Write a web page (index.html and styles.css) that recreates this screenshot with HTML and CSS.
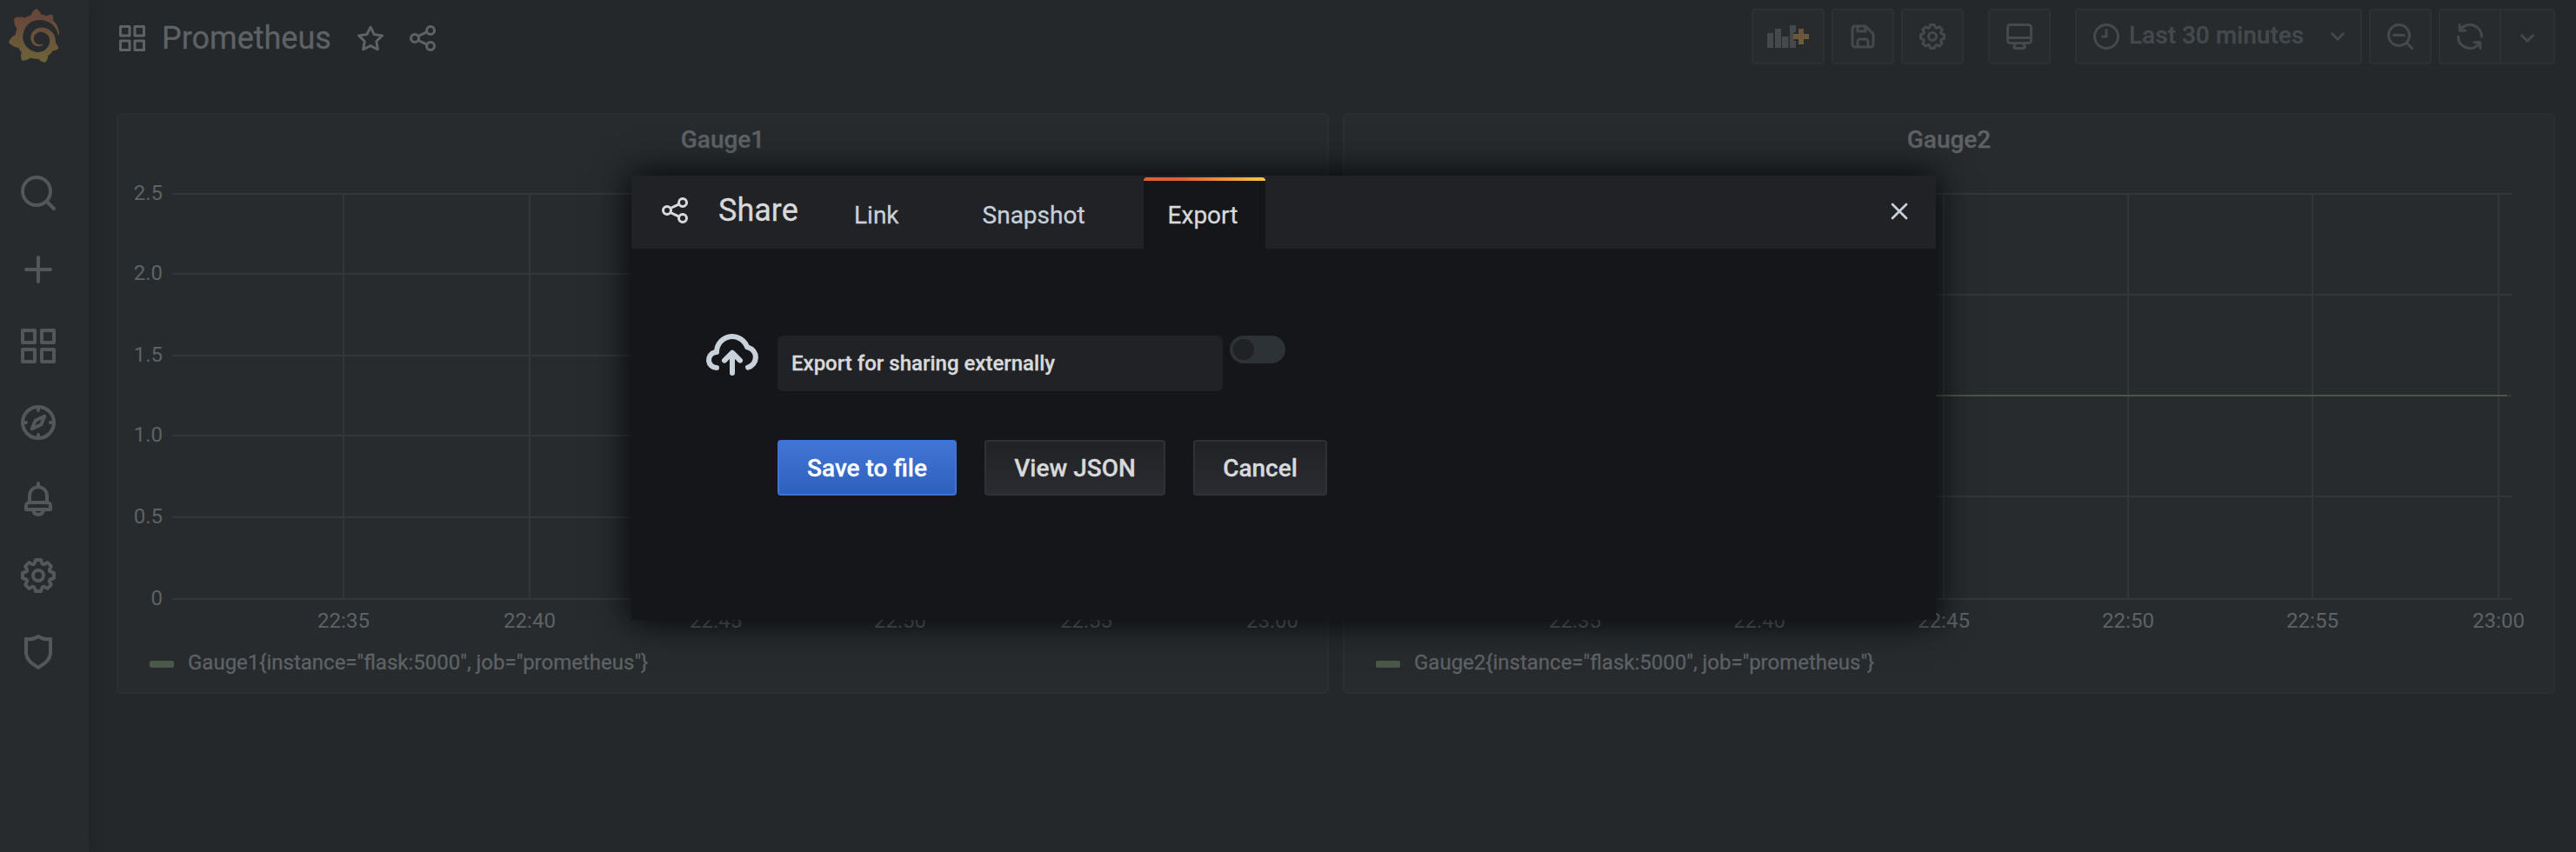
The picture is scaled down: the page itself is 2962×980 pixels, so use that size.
FILE: index.html
```
<!DOCTYPE html>
<html lang="en">
<head>
<meta charset="utf-8">
<title>Prometheus - Grafana</title>
<link rel="stylesheet" href="styles.css">
</head>
<body>
<svg class="sprite" width="0" height="0">
  <defs>
    <linearGradient id="logo-fill" x1="0" y1="0" x2="0" y2="1"><stop offset="0.15" stop-color="#67463b"/><stop offset="0.9" stop-color="#6c6039"/></linearGradient>
    <linearGradient id="plus-fill" x1="0" y1="0" x2="0" y2="1"><stop offset="0" stop-color="#6b4f3b"/><stop offset="1" stop-color="#6b613a"/></linearGradient>
    <symbol id="apps" viewBox="0 0 24 24"><path fill="none" stroke="currentColor" stroke-width="2" stroke-linejoin="round" d="M3 3h7v7H3zM14 3h7v7h-7zM3 14h7v7H3zM14 14h7v7h-7z"/></symbol>
    <symbol id="search" viewBox="0 0 24 24"><path fill="none" stroke="currentColor" stroke-width="2" stroke-linecap="round" d="M11 3a8 8 0 1 0 0 16a8 8 0 1 0 0-16M17 17l4 4"/></symbol>
    <symbol id="zoom-out" viewBox="0 0 24 24"><path fill="none" stroke="currentColor" stroke-width="2" stroke-linecap="round" d="M11 3a8 8 0 1 0 0 16a8 8 0 1 0 0-16M17 17l4 4M7 11h8"/></symbol>
    <symbol id="plus" viewBox="0 0 24 24"><path fill="none" stroke="currentColor" stroke-width="2" stroke-linecap="round" d="M12 5v14M5 12h14"/></symbol>
    <symbol id="compass" viewBox="0 0 24 24"><circle cx="12" cy="12" r="9" fill="none" stroke="currentColor" stroke-width="2"/><path fill="none" stroke="currentColor" stroke-width="2" stroke-linecap="round" stroke-linejoin="round" d="M12 3v2M12 19v2M3 12h2M19 12h2M15.6 8.4l-1.9 4.7-5.3 2.5 1.9-4.7z"/></symbol>
    <symbol id="bell" viewBox="0 0 24 24"><path d="M18,13.18V10a6,6,0,0,0-5-5.91V3a1,1,0,0,0-2,0V4.09A6,6,0,0,0,6,10v3.18A3,3,0,0,0,4,16v2a1,1,0,0,0,1,1H8.14a4,4,0,0,0,7.72,0H19a1,1,0,0,0,1-1V16A3,3,0,0,0,18,13.18ZM8,10a4,4,0,0,1,8,0v3H8Zm4,10a2,2,0,0,1-1.72-1h3.44A2,2,0,0,1,12,20Zm6-3H6V16a1,1,0,0,1,1-1H17a1,1,0,0,1,1,1Z"/></symbol>
    <symbol id="cog" viewBox="0 0 24 24"><path d="M21.32,9.55l-1.89-.63.89-1.78A1,1,0,0,0,20.13,6L18,3.87a1,1,0,0,0-1.15-.19l-1.78.89-.63-1.89A1,1,0,0,0,13.5,2h-3a1,1,0,0,0-.95.68L8.92,4.57,7.14,3.68A1,1,0,0,0,6,3.87L3.87,6a1,1,0,0,0-.19,1.15l.89,1.78-1.89.63A1,1,0,0,0,2,10.5v3a1,1,0,0,0,.68.95l1.89.63-.89,1.78A1,1,0,0,0,3.87,18L6,20.13a1,1,0,0,0,1.15.19l1.78-.89.63,1.89a1,1,0,0,0,.95.68h3a1,1,0,0,0,.95-.68l.63-1.89,1.78.89A1,1,0,0,0,18,20.13L20.13,18a1,1,0,0,0,.19-1.15l-.89-1.78,1.89-.63A1,1,0,0,0,22,13.5v-3A1,1,0,0,0,21.32,9.55ZM20,12.78l-1.2.4A2,2,0,0,0,17.64,16l.57,1.14-1.1,1.1L16,17.64a2,2,0,0,0-2.79,1.16l-.4,1.2H11.22l-.4-1.2A2,2,0,0,0,8,17.64l-1.14.57-1.1-1.1L6.36,16A2,2,0,0,0,5.2,13.18L4,12.78V11.22l1.2-.4A2,2,0,0,0,6.36,8L5.79,6.89l1.1-1.1L8,6.36A2,2,0,0,0,10.82,5.2l.4-1.2h1.56l.4,1.2A2,2,0,0,0,16,6.36l1.14-.57,1.1,1.1L17.64,8a2,2,0,0,0,1.16,2.79l1.2.4ZM12,8a4,4,0,1,0,4,4A4,4,0,0,0,12,8Zm0,6a2,2,0,1,1,2-2A2,2,0,0,1,12,14Z"/></symbol>
    <symbol id="shield" viewBox="0 0 24 24"><path d="M19.63,3.65a1,1,0,0,0-.84-.2,8,8,0,0,1-6.22-1.27,1,1,0,0,0-1.14,0A8,8,0,0,1,5.21,3.45a1,1,0,0,0-.84.2A1,1,0,0,0,4,4.43v7.45a9,9,0,0,0,3.77,7.33l3.65,2.6a1,1,0,0,0,1.16,0l3.65-2.6A9,9,0,0,0,20,11.88V4.43A1,1,0,0,0,19.63,3.65ZM18,11.88a7,7,0,0,1-2.93,5.7L12,19.77,8.93,17.58A7,7,0,0,1,6,11.88V5.58a10,10,0,0,0,6-1.39,10,10,0,0,0,6,1.39Z"/></symbol>
    <symbol id="star" viewBox="0 0 24 24"><path d="M22,9.67A1,1,0,0,0,21.14,9l-5.69-.83L12.9,3a1,1,0,0,0-1.8,0L8.55,8.16,2.86,9a1,1,0,0,0-.81.68,1,1,0,0,0,.25,1l4.13,4-1,5.68A1,1,0,0,0,6.9,21.44L12,18.77l5.1,2.67a.93.93,0,0,0,.46.12,1,1,0,0,0,.59-.19,1,1,0,0,0,.4-1l-1-5.68,4.13-4A1,1,0,0,0,22,9.67Zm-6.15,4a1,1,0,0,0-.29.88l.72,4.2-3.76-2a1.06,1.06,0,0,0-.94,0l-3.76,2,.72-4.2a1,1,0,0,0-.29-.88l-3-3,4.21-.61a1,1,0,0,0,.76-.55L12,5.7l1.88,3.82a1,1,0,0,0,.76.55l4.21.61Z"/></symbol>
    <symbol id="share" viewBox="0 0 24 24"><path d="M18,14a4,4,0,0,0-3.08,1.48l-5.1-2.35a3.64,3.64,0,0,0,0-2.26l5.1-2.35A4,4,0,1,0,14,6a4.17,4.17,0,0,0,.07.71L8.79,9.14a4,4,0,1,0,0,5.72l5.28,2.43A4.17,4.17,0,0,0,14,18a4,4,0,1,0,4-4ZM18,4a2,2,0,1,1-2,2A2,2,0,0,1,18,4ZM6,14a2,2,0,1,1,2-2A2,2,0,0,1,6,14Zm12,6a2,2,0,1,1,2-2A2,2,0,0,1,18,20Z"/></symbol>
    <symbol id="save" viewBox="0 0 24 24"><path d="M20.71,9.29l-6-6a1,1,0,0,0-.32-.21A1.09,1.09,0,0,0,14,3H6A3,3,0,0,0,3,6V18a3,3,0,0,0,3,3H18a3,3,0,0,0,3-3V10A1,1,0,0,0,20.71,9.29ZM9,5h4V7H9Zm6,14H9V16a1,1,0,0,1,1-1h4a1,1,0,0,1,1,1Zm4-1a1,1,0,0,1-1,1H17V16a3,3,0,0,0-3-3H10a3,3,0,0,0-3,3v3H6a1,1,0,0,1-1-1V6A1,1,0,0,1,6,5H7V8A1,1,0,0,0,8,9h6a1,1,0,0,0,1-1V6.41l4,4Z"/></symbol>
    <symbol id="monitor" viewBox="0 0 24 24"><path d="M19,2H5A3,3,0,0,0,2,5V15a3,3,0,0,0,3,3H7.64l-.58,1a2,2,0,0,0,0,2,2,2,0,0,0,1.75,1h6.46A2,2,0,0,0,17,21a2,2,0,0,0,0-2l-.59-1H19a3,3,0,0,0,3-3V5A3,3,0,0,0,19,2ZM8.77,20,10,18H14l1.2,2ZM20,15a1,1,0,0,1-1,1H5a1,1,0,0,1-1-1V14H20Zm0-3H4V5A1,1,0,0,1,5,4H19a1,1,0,0,1,1,1Z"/></symbol>
    <symbol id="clock" viewBox="0 0 24 24"><path fill="none" stroke="currentColor" stroke-width="2" stroke-linecap="round" stroke-linejoin="round" d="M12 3a9 9 0 1 0 0 18a9 9 0 1 0 0-18M12 7v5H9"/></symbol>
    <symbol id="sync" viewBox="0 0 24 24"><path d="M19.91,15.51H15.38a1,1,0,0,0,0,2h2.4A8,8,0,0,1,4,12a1,1,0,0,0-2,0,10,10,0,0,0,16.88,7.23V21a1,1,0,0,0,2,0V16.5A1,1,0,0,0,19.91,15.51ZM12,2A10,10,0,0,0,5.12,4.77V3a1,1,0,0,0-2,0V7.5a1,1,0,0,0,1,1h4.5a1,1,0,0,0,0-2H6.22A8,8,0,0,1,20,12a1,1,0,0,0,2,0A10,10,0,0,0,12,2Z"/></symbol>
    <symbol id="chevron" viewBox="0 0 16 10"><path fill="none" stroke="currentColor" stroke-width="2.8" stroke-linecap="round" stroke-linejoin="round" d="M1.6 1.7L8 8.2l6.4-6.5"/></symbol>
    <symbol id="close" viewBox="0 0 20 20"><path fill="none" stroke="currentColor" stroke-width="2.8" stroke-linecap="round" d="M2 2l16 16M18 2L2 18"/></symbol>
    <symbol id="cloud" viewBox="0 0 24 24"><path d="M18.42,9.21a7,7,0,0,0-13.36,1.9A4,4,0,0,0,6,19a1,1,0,0,0,0-2,2,2,0,0,1,0-4,1,1,0,0,0,1-1,5,5,0,0,1,9.73-1.61,1,1,0,0,0,.78.66,3,3,0,0,1,.24,5.84,1,1,0,1,0,.5,1.94,5,5,0,0,0,.17-9.62Z"/><path fill="none" stroke="currentColor" stroke-width="2" stroke-linecap="round" stroke-linejoin="round" d="M12 20v-7.6M9 15.2l3-3 3 3"/></symbol>
  </defs>
</svg>

<div class="app">
  <nav class="sidebar">
    <svg class="logo" viewBox="0.95 0 22.1 24" preserveAspectRatio="none"><path fill="url(#logo-fill)" d="M23.02 10.59a8.578 8.578 0 0 0-.862-3.034 8.911 8.911 0 0 0-1.789-2.445c.337-1.342-.413-2.505-.413-2.505-1.292-.08-2.113.4-2.416.62-.052-.02-.102-.044-.154-.064-.22-.089-.446-.172-.677-.247-.231-.073-.47-.14-.711-.197a9.867 9.867 0 0 0-.875-.161C14.557.753 12.94 0 12.94 0c-1.804 1.145-2.147 2.744-2.147 2.744l-.018.093c-.098.029-.2.057-.298.088-.138.042-.275.094-.413.143-.138.055-.275.107-.41.166a8.869 8.869 0 0 0-1.557.87l-.063-.029c-2.497-.955-4.716.195-4.716.195-.203 2.658.996 4.33 1.235 4.636a11.608 11.608 0 0 0-.607 2.635C1.636 12.677.953 15.014.953 15.014c1.926 2.214 4.171 2.351 4.171 2.351.003-.002.006-.002.006-.005.285.509.615.994.986 1.446.156.19.32.371.488.548-.704 2.009.099 3.68.099 3.68 2.144.08 3.553-.937 3.849-1.173a9.784 9.784 0 0 0 3.164.501h.08l.055-.003.107-.002.103-.005.003.002c1.01 1.44 2.788 1.646 2.788 1.646 1.264-1.332 1.337-2.653 1.337-2.94v-.058c0-.02-.003-.039-.003-.06.265-.187.52-.387.758-.6a7.875 7.875 0 0 0 1.415-1.7c1.43.083 2.437-.885 2.437-.885-.236-1.49-1.085-2.216-1.264-2.354l-.018-.013-.016-.013a.217.217 0 0 1-.031-.02c.008-.092.016-.18.02-.27.011-.162.016-.323.016-.48v-.253l-.005-.098-.008-.135a1.891 1.891 0 0 0-.01-.13c-.003-.042-.008-.083-.013-.125l-.016-.124-.018-.122a6.215 6.215 0 0 0-2.032-3.73 6.015 6.015 0 0 0-3.222-1.46 6.292 6.292 0 0 0-.85-.048l-.107.002h-.063l-.044.003-.104.008a4.777 4.777 0 0 0-3.335 1.695c-.332.4-.592.84-.768 1.297a4.594 4.594 0 0 0-.312 1.817l.003.091c.005.055.007.11.013.164a3.615 3.615 0 0 0 .698 1.82 3.53 3.53 0 0 0 1.827 1.282c.33.098.66.14.971.137.039 0 .078 0 .114-.002l.063-.003c.02 0 .041-.003.062-.003.034-.002.065-.007.099-.01.007 0 .018-.003.028-.003l.031-.005.06-.008a1.18 1.18 0 0 0 .112-.02c.036-.008.072-.013.109-.024a2.634 2.634 0 0 0 .914-.415c.028-.02.056-.041.085-.065a.248.248 0 0 0 .039-.35.244.244 0 0 0-.309-.06l-.078.042c-.09.044-.184.083-.283.116a2.476 2.476 0 0 1-.475.096c-.028.003-.054.006-.083.006l-.083.002c-.026 0-.054 0-.08-.002l-.102-.006h-.012l-.024.006c-.016-.003-.031-.003-.044-.006-.031-.002-.06-.007-.091-.01a2.59 2.59 0 0 1-.724-.213 2.557 2.557 0 0 1-.667-.438 2.52 2.52 0 0 1-.805-1.475 2.306 2.306 0 0 1-.029-.444l.006-.122v-.023l.002-.031c.003-.021.003-.04.005-.06a3.163 3.163 0 0 1 1.352-2.29 3.12 3.12 0 0 1 .937-.43 2.946 2.946 0 0 1 .776-.101h.06l.07.002.045.003h.026l.07.005a4.041 4.041 0 0 1 1.635.49 3.94 3.94 0 0 1 1.602 1.662 3.77 3.77 0 0 1 .397 1.414l.005.076.003.075c.002.026.002.05.002.075 0 .024.003.052 0 .07v.065l-.002.073-.008.174a6.195 6.195 0 0 1-.08.639 5.1 5.1 0 0 1-.267.927 5.31 5.31 0 0 1-.624 1.13 5.052 5.052 0 0 1-3.237 2.014 4.82 4.82 0 0 1-.649.066l-.039.003h-.287a6.607 6.607 0 0 1-1.716-.265 6.776 6.776 0 0 1-3.4-2.274 6.75 6.75 0 0 1-.746-1.15 6.616 6.616 0 0 1-.714-2.596l-.005-.083-.002-.02v-.056l-.003-.073v-.096l-.003-.104v-.07l.003-.163c.008-.22.026-.45.054-.678a8.707 8.707 0 0 1 .28-1.355c.128-.444.286-.872.473-1.277a7.04 7.04 0 0 1 1.456-2.1 5.925 5.925 0 0 1 .953-.763c.169-.111.343-.213.524-.306.089-.05.182-.091.273-.135.047-.02.093-.042.138-.062a7.177 7.177 0 0 1 .714-.267l.145-.045c.049-.015.098-.026.148-.041.098-.029.197-.052.296-.076.049-.013.1-.02.15-.033l.15-.032.151-.028.076-.013.075-.01.153-.024c.057-.01.114-.013.171-.023l.169-.021c.036-.003.073-.008.106-.01l.073-.008.036-.003.042-.002c.057-.003.114-.008.171-.01l.086-.006h.023l.037-.003.145-.007a7.999 7.999 0 0 1 1.708.125 7.917 7.917 0 0 1 2.048.68 8.253 8.253 0 0 1 1.672 1.09l.09.077.089.078c.06.052.114.107.171.159.057.052.112.106.166.16.052.055.107.107.159.164a8.671 8.671 0 0 1 1.41 1.978c.012.026.028.052.04.078l.04.078.075.156c.023.051.05.1.07.153l.065.15a8.848 8.848 0 0 1 .45 1.34.19.19 0 0 0 .201.142.186.186 0 0 0 .172-.184c.01-.246.002-.532-.024-.856z"/></svg>
    <div class="side-items">
      <a class="side-item"><svg class="icon-lg"><use href="#search"/></svg></a>
      <a class="side-item"><svg class="icon-lg"><use href="#plus"/></svg></a>
      <a class="side-item"><svg class="icon-lg"><use href="#apps"/></svg></a>
      <a class="side-item"><svg class="icon-lg"><use href="#compass"/></svg></a>
      <a class="side-item"><svg class="icon-lg"><use href="#bell"/></svg></a>
      <a class="side-item"><svg class="icon-lg"><use href="#cog"/></svg></a>
      <a class="side-item"><svg class="icon-lg"><use href="#shield"/></svg></a>
    </div>
  </nav>

  <main class="main">
    <header class="topbar">
      <div class="heading">
        <svg class="icon"><use href="#apps"/></svg>
        <span class="page-title">Prometheus</span>
        <svg class="icon star"><use href="#star"/></svg>
        <svg class="icon share"><use href="#share"/></svg>
      </div>
      <div class="toolbar">
        <button class="tool add"><svg class="icon-add" viewBox="0 0 48 26"><path d="M0 9h7v17H0zM9 4h7v22H9zM17 13h7.500v13H17zM26 0h7v8h-2l-1 4v2l1 4h2v8h-7z"/><path fill="url(#plus-fill)" d="M36 4h6v6h6v6h-6v6h-6v-6h-6v-6h6z"/></svg></button>
        <button class="tool"><svg class="icon"><use href="#save"/></svg></button>
        <button class="tool"><svg class="icon"><use href="#cog"/></svg></button>
        <button class="tool spaced"><svg class="icon"><use href="#monitor"/></svg></button>
        <button class="tool range spaced"><svg class="icon"><use href="#clock"/></svg><span class="range-text">Last 30 minutes</span><svg class="chevron"><use href="#chevron"/></svg></button>
        <button class="tool"><svg class="icon"><use href="#zoom-out"/></svg></button>
        <div class="tool-group">
          <button class="tool refresh"><svg class="icon"><use href="#sync"/></svg></button>
          <button class="tool interval"><svg class="chevron"><use href="#chevron"/></svg></button>
        </div>
      </div>
    </header>

    <section class="panels">
      <article class="panel">
        <h2 class="panel-title">Gauge1</h2>
        <svg class="chart" viewBox="0 0 1390 552">
          <path class="grid" d="M62 35H1342M62 127H1342M62 221H1342M62 313H1342M62 407H1342M62 501H1342M259 34V500M473 34V500M687 34V500M899 34V500M1113 34V500M1327 34V500"/>
          <g class="axis-y">
            <text x="51" y="42">2.5</text><text x="51" y="134">2.0</text><text x="51" y="228">1.5</text><text x="51" y="320">1.0</text><text x="51" y="414">0.5</text><text x="51" y="508">0</text>
          </g>
          <g class="axis-x">
            <text x="259" y="534">22:35</text><text x="473" y="534">22:40</text><text x="687" y="534">22:45</text><text x="899" y="534">22:50</text><text x="1113" y="534">22:55</text><text x="1327" y="534">23:00</text>
          </g>
        </svg>
        <div class="legend"><span class="swatch"></span><span>Gauge1{instance="flask:5000", job="prometheus"}</span></div>
      </article>
      <article class="panel">
        <h2 class="panel-title">Gauge2</h2>
        <svg class="chart" viewBox="0 0 1390 552">
          <path class="grid" d="M62 35H1342M62 151H1342M62 267H1342M62 383H1342M62 501H1342M265 34V500M477 34V500M689 34V500M901 34V500M1113 34V500M1327 34V500"/>
          <path class="series" d="M62 267H1337"/>
          <g class="axis-x">
            <text x="265" y="534">22:35</text><text x="477" y="534">22:40</text><text x="689" y="534">22:45</text><text x="901" y="534">22:50</text><text x="1113" y="534">22:55</text><text x="1327" y="534">23:00</text>
          </g>
        </svg>
        <div class="legend"><span class="swatch"></span><span>Gauge2{instance="flask:5000", job="prometheus"}</span></div>
      </article>
    </section>
  </main>
</div>

<div class="modal">
  <header class="modal-header">
    <div class="modal-title"><svg class="icon"><use href="#share"/></svg><span class="modal-name">Share</span></div>
    <ul class="tabs">
      <li class="tab">Link</li>
      <li class="tab">Snapshot</li>
      <li class="tab active">Export</li>
    </ul>
    <button class="close"><svg class="close-icon"><use href="#close"/></svg></button>
  </header>
  <div class="modal-body">
    <svg class="cloud"><use href="#cloud"/></svg>
    <div class="form">
      <div class="field">
        <label class="field-label">Export for sharing externally</label>
        <span class="switch"><span class="knob"></span></span>
      </div>
      <div class="actions">
        <button class="btn primary">Save to file</button>
        <button class="btn json">View JSON</button>
        <button class="btn cancel">Cancel</button>
      </div>
    </div>
  </div>
</div>
</body>
</html>
```
FILE: styles.css
```
* { box-sizing: border-box; }
html, body { margin: 0; height: 100%; }
body {
  position: relative;
  overflow: hidden;
  background: #24282b;
  color: #5e6265;
  font-family: Roboto, "Liberation Sans", sans-serif;
  font-size: 24px;
  -webkit-text-stroke: .3px;
}
svg { display: block; fill: currentColor; flex: none; }
.sprite { position: absolute; }
button { font: inherit; color: inherit; margin: 0; padding: 0; }
.icon { width: 36px; height: 36px; }
.icon-lg { width: 48px; height: 48px; }

.app { display: flex; height: 980px; }
.sidebar {
  position: relative;
  width: 102px;
  flex: none;
  padding-top: 10px;
  background: #272b2e;
  color: #53575a;
  box-shadow: 0 0 20px rgba(0, 0, 0, .12);
}
.logo { width: 58px; height: 62px; margin-left: 9.5px; }
.side-items { margin-top: 106px; }
.side-item { display: flex; align-items: center; height: 88px; padding-left: 20px; }

.main { flex: 1; min-width: 0; padding: 0 24px 0 32px; }
.topbar { display: flex; justify-content: space-between; height: 130px; padding-top: 10px; }
.heading { display: flex; align-items: center; height: 64px; padding-top: 4px; }
.page-title { width: 221px; margin-left: 16px; font-size: 36px; line-height: 48px; }
.heading .star { margin-left: 1px; margin-right: 24px; }
.toolbar { display: flex; gap: 8px; height: 64px; color: #45494c; }
.tool {
  display: flex;
  align-items: center;
  justify-content: center;
  width: 72px;
  height: 64px;
  background: #272b2e;
  border: 2px solid #2d3134;
  border-radius: 4px;
}
.tool.add { width: 84px; }
.icon-add { width: 48px; height: 26px; }
.tool.spaced { margin-left: 20px; }
.tool.range { width: 330px; justify-content: flex-start; padding: 0 18px 0 16px; }
.range-text { margin-left: 8px; padding-bottom: 2px; font-size: 28px; font-weight: 500; line-height: 58px; }
.chevron { width: 16px; height: 10px; }
.range .chevron { margin-left: auto; }
.tool-group { display: flex; }
.refresh { border-radius: 4px 0 0 4px; }
.interval { width: 64px; margin-left: -2px; padding-top: 4px; border-radius: 0 4px 4px 0; }

.panels { display: grid; grid-template-columns: 1394px 1394px; gap: 16px; }
.panel {
  height: 668px;
  background: #272b2e;
  border: 2px solid #2b2f32;
  border-radius: 6px;
}
.panel-title { margin: 0; padding-top: 2px; font-size: 28px; font-weight: 500; line-height: 54px; text-align: center; }
.chart { width: 1390px; height: 552px; }
.chart text { fill: #5e6265; font-size: 24px; }
.axis-x { text-anchor: middle; }
.axis-y { text-anchor: end; }
.grid { fill: none; stroke: #33373a; stroke-width: 2; }
.series { fill: none; stroke: #4a5841; stroke-width: 2; }
.legend { display: flex; align-items: center; gap: 16px; height: 44px; padding-left: 36px; }
.swatch { width: 28px; height: 8px; margin-top: 4px; border-radius: 2px; background: #4a5947; }

.modal {
  position: absolute;
  left: 726px;
  top: 202px;
  width: 1500px;
  height: 511px;
  background: #141619;
  color: #d8d9da;
  box-shadow: 0 0 40px #000;
}
.modal-header { display: flex; height: 84px; background: #202226; }
.modal-title { display: flex; align-items: center; width: 228px; height: 80px; padding-left: 32px; font-size: 36px; gap: 32px; }
.modal-name { line-height: 48px; }
.tabs { display: flex; gap: 40px; margin: 2px 0 0; padding: 0; list-style: none; }
.tab { height: 82px; padding: 6px 28px 0; color: #c7d0d9; font-size: 28px; line-height: 76px; }
.tab.active {
  width: 140px;
  margin-left: -1px;
  border-radius: 4px 4px 0 0;
  color: #d8d9da;
  background: linear-gradient(90deg, #e05f33 30%, #f9c642 99%) top / 100% 4px no-repeat #141619;
}
.close { margin-left: auto; padding: 0 32px 3px; border: 0; background: none; color: #c7d0d9; }
.close-icon { width: 20px; height: 20px; }
.modal-body { display: flex; padding: 83px 0 0 80px; }
.cloud { width: 72px; height: 72px; color: #c9d1da; }
.form { padding: 17px 0 0 16px; }
.field { display: flex; gap: 8px; }
.field-label { width: 512px; height: 64px; padding-left: 16px; border-radius: 6px; background: #202226; font-weight: 500; line-height: 64px; }
.switch { width: 64px; height: 32px; padding: 4px; border-radius: 16px; background: #2c3235; }
.knob { display: block; width: 24px; height: 24px; border-radius: 50%; background: #202226; }
.actions { display: flex; gap: 32px; margin-top: 56px; }
.btn {
  height: 64px;
  border: 2px solid #2c3235;
  border-radius: 4px;
  background: linear-gradient(#202226, #2b2c31);
  font-size: 28px;
  font-weight: 500;
}
.primary { width: 206px; color: #fff; border-color: #3e74d6; background: linear-gradient(#4275d5, #2e60bd); }
.json { width: 208px; }
.cancel { width: 154px; }
```
